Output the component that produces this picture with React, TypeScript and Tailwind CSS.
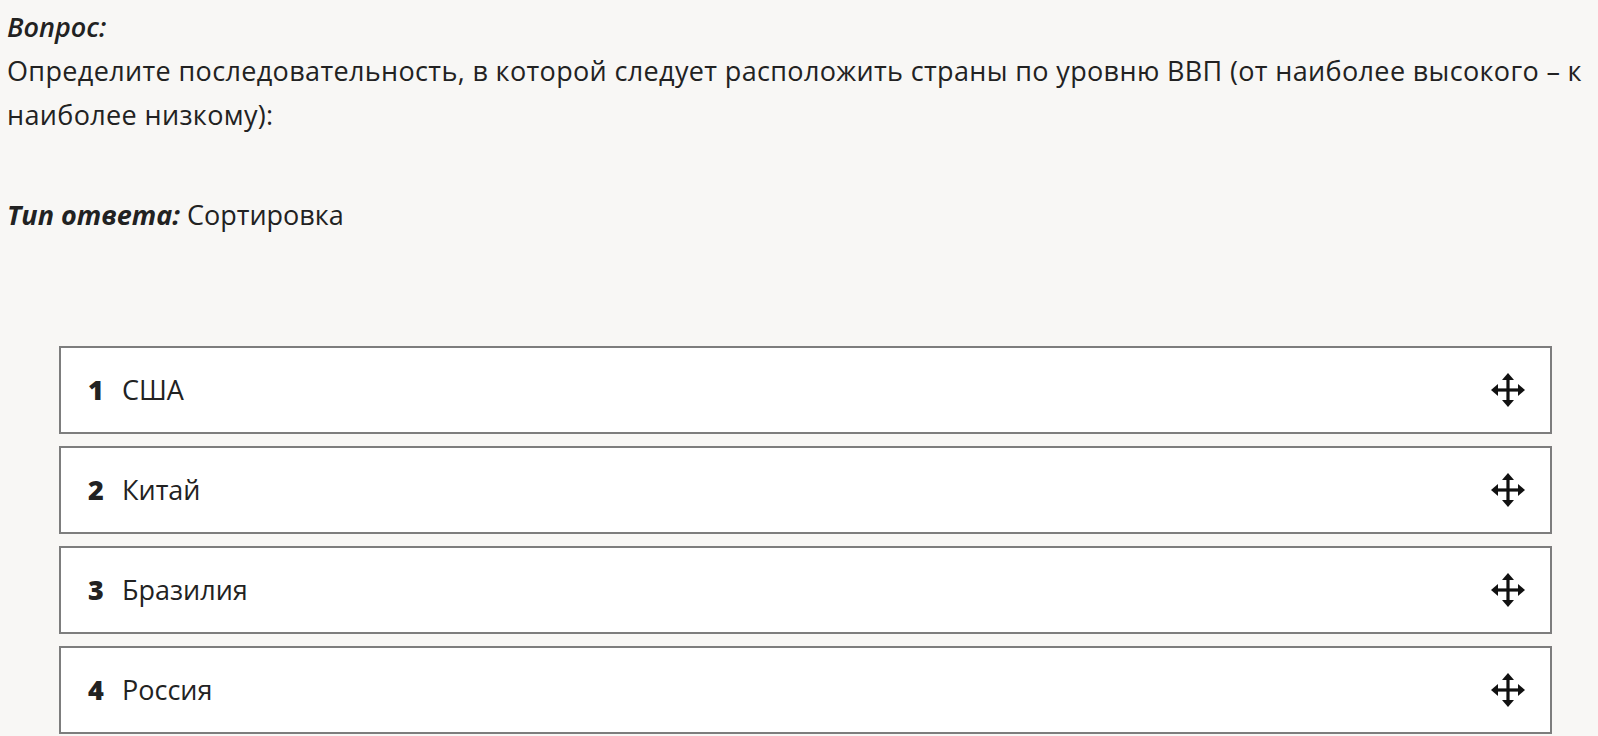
import React from "react";

const items = ["США", "Китай", "Бразилия", "Россия"];

function MoveIcon() {
  return (
    <svg width="34" height="34" viewBox="0 0 34 34" aria-hidden="true">
      <g stroke="#111" strokeWidth="3.2" strokeLinecap="butt">
        <line x1="17" y1="6" x2="17" y2="28" />
        <line x1="6" y1="17" x2="28" y2="17" />
      </g>
      <g fill="#111">
        <polygon points="17,0 11,7 23,7" />
        <polygon points="17,34 11,27 23,27" />
        <polygon points="0,17 7,11 7,23" />
        <polygon points="34,17 27,11 27,23" />
      </g>
    </svg>
  );
}

export default function App() {
  return (
    <div
      className="min-h-[736px] bg-[#f8f7f5] text-[#222222] text-[27px] leading-[44px] pl-[7px] pt-[5px]"
      style={{ fontFamily: '"Open Sans", "Noto Sans", sans-serif' }}
    >
      <div className="font-semibold italic">Вопрос:</div>
      <p className="tracking-[0.35px]">
        Определите последовательность, в которой следует расположить страны по уровню ВВП (от наиболее высокого – к наиболее низкому):
      </p>
      <p className="mt-[56px]">
        <span className="font-bold italic">Тип ответа:</span> Сортировка
      </p>
      <div className="mt-[109px] ml-[52px] mr-[46px] flex flex-col gap-[12px]">
        {items.map((name, i) => (
          <div
            key={name}
            className="h-[88px] bg-white border-2 border-[#7d7d7d] flex items-center pl-[27px] pr-[25px]"
          >
            <span className="font-extrabold w-[34px]">{i + 1}</span>
            <span className="flex-1">{name}</span>
            <MoveIcon />
          </div>
        ))}
      </div>
    </div>
  );
}
